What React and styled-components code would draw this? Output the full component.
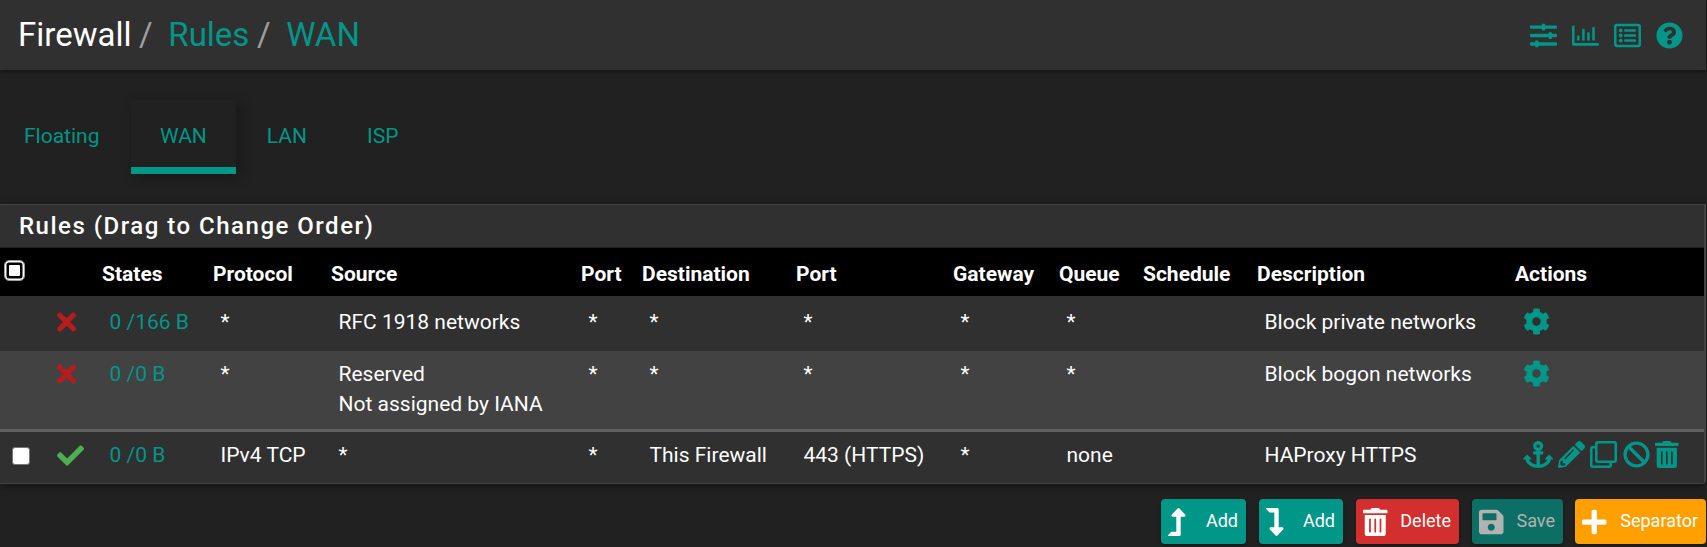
import React from "react";
import styled, { createGlobalStyle, css } from "styled-components";
import {
  FaSlidersH, FaRegChartBar, FaRegListAlt, FaQuestionCircle, FaTimes, FaCheck, FaCog,
  FaAnchor, FaPencilAlt, FaRegClone, FaBan, FaTrashAlt, FaLevelUpAlt, FaLevelDownAlt,
  FaSave, FaPlus,
} from "react-icons/fa";

const teal = "#009688";

const GlobalStyle = createGlobalStyle`
  * { box-sizing: border-box; }
  body {
    margin: 0;
    height: 547px;
    overflow: hidden;
    background: #212121;
    color: #fff;
    font: 21px/30px Roboto, sans-serif;
  }
`;

// $w is the glyph's own width, in units where its height is 512.
const Glyph = styled.span`
  display: block;
  flex: none;
  line-height: 0;
  svg {
    display: block;
    width: ${(p) => (p.$w || 512) / 512}em;
    height: 1em;
  }
`;

const Page = styled.div`
  width: 1706px;
`;

const Header = styled.header`
  height: 70px;
  padding: 0 23px 0 18px;
  display: flex;
  align-items: center;
  justify-content: space-between;
  background: #303030;
  box-shadow: 0 1px 5px rgba(0, 0, 0, 0.5);
`;

const Breadcrumb = styled.nav`
  display: flex;
  font-size: 33px;
  line-height: 40px;
`;

const Crumb = styled.span`
  color: ${(p) => (p.$link ? teal : "#fff")};
`;

const Slash = styled.span`
  color: #9e9e9e;
  margin: 0 15.75px 0 7.5px;
`;

const HeaderIcons = styled.div`
  display: flex;
  gap: 15px;
  color: ${teal};
  font-size: 27px;
  padding-top: 1px;
`;

const Tabs = styled.nav`
  display: flex;
  margin-top: 30px;
  height: 74px;
`;

const Tab = styled.a`
  color: ${teal};
  padding: 21px ${(p) => p.$right}px 0 ${(p) => p.$left}px;
  ${(p) =>
    p.$active &&
    css`
      border-bottom: 7px solid ${teal};
      box-shadow: 3px 3px 12px rgba(0, 0, 0, 0.3);
    `}
`;

const Panel = styled.section`
  margin-top: 30px;
  height: 280px;
  border: 1px solid #424242;
  border-width: 1px 2px 1px 0;
  border-radius: 0 0 4px 0;
  background: #303030;
  box-shadow: 0 2px 10px rgba(0, 0, 0, 0.4);
`;

const PanelTitle = styled.h2`
  margin: 0;
  height: 43px;
  padding: 6px 0 0 19px;
  border-bottom: 1px solid #212121;
  font-size: 24px;
  line-height: 30px;
  font-weight: 500;
  letter-spacing: 1.5px;
`;

const Table = styled.table`
  width: 1704px;
  table-layout: fixed;
  border-collapse: collapse;
  border-spacing: 0;
`;

const HeadRow = styled.tr`
  height: 48px;
  background: #000;
`;

const Th = styled.th`
  padding: 3px 0 0;
  text-align: left;
  font-weight: 700;
  white-space: nowrap;
`;

const Row = styled.tr`
  height: ${(p) => p.$height}px;
  background: ${(p) => (p.$striped ? "#424242" : "#303030")};
  & > td {
    padding-top: ${(p) => p.$top}px;
  }
`;

const DividerRow = styled.tr`
  height: 3px;
  background: #616161;
  & > td { padding: 0; line-height: 0; }
`;

const Td = styled.td`
  padding: 0 0 0 7.5px;
  vertical-align: top;
  white-space: pre-line;
`;

const StateLink = styled.a`
  color: ${teal};
`;

const Mark = styled.div`
  display: flex;
  align-items: center;
  height: 30px;
  font-size: ${(p) => (p.$pass ? 27 : 28)}px;
  margin-left: -3px;
  color: ${(p) => (p.$pass ? "#4caf50" : "#b71c1c")};
`;

const SelectAll = styled.button`
  display: grid;
  place-items: center;
  width: 21px;
  height: 21px;
  margin: -6px 0 0 4px;
  padding: 0;
  border: 1px solid #9e9e9e;
  border-radius: 5px;
  background: #000;
  box-shadow: inset 0 0 0 1.5px #fff;
  &::before {
    content: "";
    width: 11px;
    height: 11px;
    border-radius: 1px;
    background: #fff;
  }
`;

const RowCheck = styled.div`
  width: 18px;
  height: 18px;
  margin: 7px 0 0 4.5px;
  border: 1px solid #767676;
  border-radius: 3px;
  background: #fff;
`;

const Actions = styled.div`
  display: flex;
  align-items: center;
  height: 29px;
  gap: 5.25px;
  color: ${teal};
  font-size: 27px;
`;

const ButtonBar = styled.div`
  display: flex;
  justify-content: flex-end;
  gap: 13px;
  margin-top: 15px;
`;

const Button = styled.button`
  display: flex;
  align-items: center;
  justify-content: space-between;
  width: ${(p) => p.$width}px;
  height: 45px;
  padding: 0 8px 2px 7px;
  border: 0;
  border-radius: 4px;
  background: ${(p) => p.$bg};
  color: ${(p) => (p.$muted ? "#b2b2b2" : "#fff")};
  font: 18px Roboto, sans-serif;
  box-shadow: 0 1px 3px rgba(0, 0, 0, 0.4);
  ${Glyph} { font-size: 28px; margin-top: 2px; }
  &:last-child { margin-left: -1px; }
`;

const columns = [
  [52, <SelectAll key="all" aria-label="Select all" />], [50, ""], [111, "States"],
  [118, "Protocol"], [250, "Source"], [61, "Port"], [154, "Destination"],
  [157, "Port"], [106, "Gateway"], [84, "Queue"], [114, "Schedule"],
  [258, "Description"], [189, "Actions"],
];

const rules = [
  {
    height: 55, top: 11, states: "0 /166 B", protocol: "*", source: "RFC 1918 networks",
    destination: "*", port: "*", queue: "*", description: "Block private networks",
  },
  {
    height: 78, top: 8, striped: true, states: "0 /0 B", protocol: "*",
    source: "Reserved\nNot assigned by IANA", destination: "*", port: "*", queue: "*",
    description: "Block bogon networks",
  },
  {
    height: 51, top: 8, pass: true, divider: true, states: "0 /0 B", protocol: "IPv4 TCP",
    source: "*", destination: "This Firewall", port: "443 (HTTPS)", queue: "none",
    description: "HAProxy HTTPS",
  },
];

function RuleRow({ rule }) {
  return (
    <>
      {rule.divider && <DividerRow><td colSpan={13} /></DividerRow>}
      <Row $height={rule.height} $top={rule.top} $striped={rule.striped}>
        <Td>{rule.pass && <RowCheck />}</Td>
        <Td>
          <Mark $pass={rule.pass}>
            {rule.pass ? <Glyph><FaCheck /></Glyph> : <Glyph $w={352}><FaTimes /></Glyph>}
          </Mark>
        </Td>
        <Td><StateLink>{rule.states}</StateLink></Td>
        <Td>{rule.protocol}</Td>
        <Td>{rule.source}</Td>
        <Td>*</Td>
        <Td>{rule.destination}</Td>
        <Td>{rule.port}</Td>
        <Td>*</Td>
        <Td>{rule.queue}</Td>
        <Td />
        <Td>{rule.description}</Td>
        <Td>
          <Actions>
            {rule.pass ? (
              <>
                <Glyph $w={576}><FaAnchor /></Glyph>
                <Glyph><FaPencilAlt /></Glyph>
                <Glyph><FaRegClone /></Glyph>
                <Glyph><FaBan /></Glyph>
                <Glyph $w={448}><FaTrashAlt /></Glyph>
              </>
            ) : (
              <Glyph><FaCog /></Glyph>
            )}
          </Actions>
        </Td>
      </Row>
    </>
  );
}

export default function App() {
  return (
    <Page>
      <GlobalStyle />
      <Header>
        <Breadcrumb>
          <Crumb>Firewall</Crumb>
          <Slash>/</Slash>
          <Crumb $link>Rules</Crumb>
          <Slash>/</Slash>
          <Crumb $link>WAN</Crumb>
        </Breadcrumb>
        <HeaderIcons>
          <Glyph><FaSlidersH /></Glyph>
          <Glyph><FaRegChartBar /></Glyph>
          <Glyph><FaRegListAlt /></Glyph>
          <Glyph><FaQuestionCircle /></Glyph>
        </HeaderIcons>
      </Header>
      <Tabs>
        <Tab $left={24} $right={32}>Floating</Tab>
        <Tab $left={28.5} $right={29} $active>WAN</Tab>
        <Tab $left={31} $right={30}>LAN</Tab>
        <Tab $left={30} $right={30}>ISP</Tab>
      </Tabs>
      <Panel>
        <PanelTitle>Rules (Drag to Change Order)</PanelTitle>
        <Table>
          <colgroup>
            {columns.map(([width], i) => <col key={i} width={width} />)}
          </colgroup>
          <thead>
            <HeadRow>
              {columns.map(([, label], i) => <Th key={i}>{label}</Th>)}
            </HeadRow>
          </thead>
          <tbody>
            {rules.map((rule, i) => <RuleRow key={i} rule={rule} />)}
          </tbody>
        </Table>
      </Panel>
      <ButtonBar>
        <Button $width={85} $bg={teal}><Glyph $w={320}><FaLevelUpAlt /></Glyph>Add</Button>
        <Button $width={84} $bg={teal}><Glyph $w={320}><FaLevelDownAlt /></Glyph>Add</Button>
        <Button $width={103} $bg="#d32f2f"><Glyph $w={448}><FaTrashAlt /></Glyph>Delete</Button>
        <Button $width={91} $bg="#0d6e65" $muted><Glyph $w={448}><FaSave /></Glyph>Save</Button>
        <Button $width={131} $bg="#ffa000"><Glyph $w={448}><FaPlus /></Glyph>Separator</Button>
      </ButtonBar>
    </Page>
  );
}
